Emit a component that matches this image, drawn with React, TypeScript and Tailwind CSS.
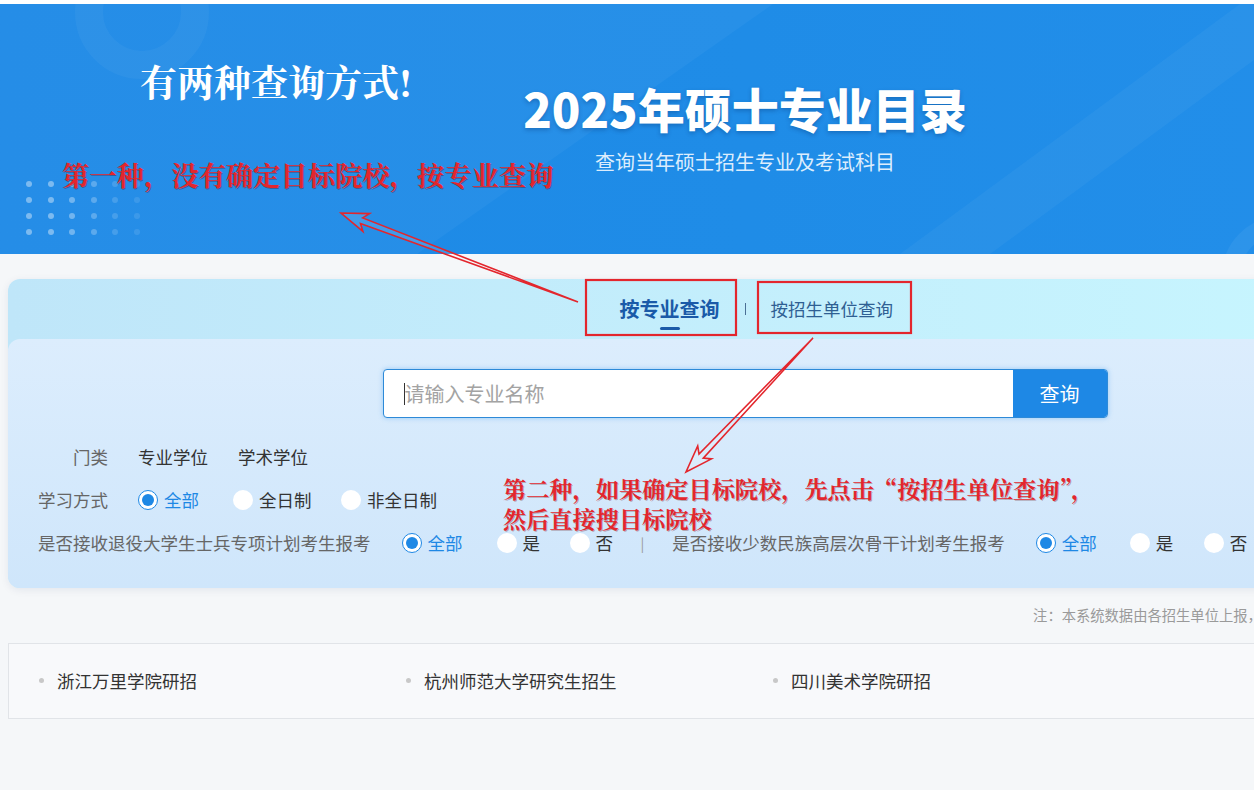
type Pt = [number, number];

// hollow annotation arrow, points computed along tail -> tip
function arrowPoints(tail: Pt, tip: Pt, head = 26, wing = 10, shaft = 3.5) {
  const dx = tip[0] - tail[0];
  const dy = tip[1] - tail[1];
  const len = Math.hypot(dx, dy);
  const ux = dx / len;
  const uy = dy / len;
  const nx = -uy;
  const ny = ux;
  const at = (a: number, b: number) =>
    `${(tail[0] + ux * a + nx * b).toFixed(1)},${(tail[1] + uy * a + ny * b).toFixed(1)}`;
  const base = len - head;
  return [at(0, 0), at(base + 3, shaft), at(base - 2, wing), at(len, 0), at(base - 2, -wing), at(base + 3, -shaft)].join(" ");
}

const dotCols = ["bg-white/40", "bg-white/40", "bg-white/35", "bg-white/25", "bg-white/15", "bg-white/10"];

function Banner() {
  return (
    <div className="relative h-[250px] overflow-hidden bg-gradient-to-r from-[#1d89e6] via-[#1f8ce7] to-[#238fea]">
      <div className="absolute inset-0 bg-white/[0.035] [clip-path:polygon(0_0,773px_0,417px_100%,0_100%)]" />
      <div className="absolute inset-0 bg-white/[0.04] [clip-path:polygon(900px_100%,990px_100%,1330px_0,1240px_0)]" />
      <div className="absolute left-[75px] top-[-59px] h-[134px] w-[134px] rounded-full border-[28px] border-white/[0.04]" />
      <div className="absolute left-[1222px] top-[212px] h-[120px] w-[120px] rounded-full border-[18px] border-white/[0.05]" />
      <div className="absolute left-[26px] top-[177px] grid grid-cols-6 gap-x-[15.5px] gap-y-[10px]">
        {Array.from({ length: 24 }).map((_, i) => (
          <span key={i} className={`h-[6px] w-[6px] rounded-full ${dotCols[i % 6]}`} />
        ))}
      </div>
      <div className="relative flex flex-col items-center pt-[80px]">
        <h1 className="text-[47px] font-black leading-[47px] text-white [text-shadow:0_2px_4px_rgba(0,40,100,0.3)]">
          2025年硕士专业目录
        </h1>
        <p className="mt-[21px] text-[20px] leading-[20px] text-[#dcedfd]">查询当年硕士招生专业及考试科目</p>
      </div>
    </div>
  );
}

function Radio({ checked }: { checked?: boolean }) {
  if (checked) {
    return (
      <span className="flex h-5 w-5 shrink-0 items-center justify-center rounded-full border-[1.5px] border-[#1e88e5] bg-white">
        <span className="h-[12px] w-[12px] rounded-full bg-[#1e88e5]" />
      </span>
    );
  }
  return <span className="h-5 w-5 shrink-0 rounded-full bg-white" />;
}

function Option({ label, checked, w }: { label: string; checked?: boolean; w: string }) {
  return (
    <span className={`flex items-center ${w}`}>
      <Radio checked={checked} />
      <span className={checked ? "ml-[6px] text-[#1e88e5]" : "ml-[6px] text-[#333]"}>{label}</span>
    </span>
  );
}

function Filters() {
  return (
    <div className="px-[30px] text-[17.5px] leading-none">
      <div className="mt-[17.5px] flex h-[43px] items-center">
        <span className="w-[70px] text-right text-[#666]">门类</span>
        <span className="ml-[30px] text-[#333]">专业学位</span>
        <span className="ml-[30px] text-[#333]">学术学位</span>
      </div>
      <div className="flex h-[43px] items-center">
        <span className="w-[70px] text-[#666]">学习方式</span>
        <span className="ml-[30px] flex items-center">
          <Option label="全部" checked w="w-[95px]" />
          <Option label="全日制" w="w-[108px]" />
          <Option label="非全日制" w="w-[110px]" />
        </span>
      </div>
      <div className="flex h-[43px] items-center">
        <span className="text-[#666]">是否接收退役大学生士兵专项计划考生报考</span>
        <span className="ml-[31px] flex items-center">
          <Option label="全部" checked w="w-[95px]" />
          <Option label="是" w="w-[73px]" />
          <Option label="否" w="w-[71px]" />
        </span>
        <span className="text-[14px] text-[#999]">|</span>
        <span className="ml-[28px] text-[#666]">是否接收少数民族高层次骨干计划考生报考</span>
        <span className="ml-[31px] flex items-center">
          <Option label="全部" checked w="w-[94px]" />
          <Option label="是" w="w-[74px]" />
          <Option label="否" w="w-[74px]" />
        </span>
      </div>
    </div>
  );
}

function Annotations() {
  const red = "#e3262d";
  return (
    <div className="pointer-events-none absolute inset-0 z-10 font-['Noto_Serif_CJK_SC','Noto_Sans_CJK_SC',serif]">
      <div className="absolute left-[140px] top-[60px] text-[37px] font-bold leading-[42px] text-white">有两种查询方式!</div>
      <div className="absolute left-[62px] top-[160px] text-[27.3px] font-bold leading-[30px] text-[#e3262d] [text-shadow:1px_1px_0_rgba(90,0,0,0.35)]">
        第一种，没有确定目标院校，按专业查询
      </div>
      <div className="absolute left-[503px] top-[473px] text-[23.2px] font-bold leading-[30px] text-[#e3262d] [text-shadow:1px_1px_0_rgba(90,0,0,0.3)]">
        <div>第二种，如果确定目标院校，先点击“按招生单位查询”，</div>
        <div>然后直接搜目标院校</div>
      </div>
      <svg className="absolute left-0 top-0" width="1490" height="790" viewBox="0 0 1490 790">
        <rect x="586" y="280" width="150" height="55" fill="none" stroke={red} strokeWidth="2.2" />
        <rect x="758" y="282" width="153" height="51" fill="none" stroke={red} strokeWidth="2.2" />
        <polygon points={arrowPoints([578, 302], [341, 213], 25, 9.5, 3)} fill="rgba(255,255,255,0.12)" stroke={red} strokeWidth="1.6" strokeLinejoin="miter" />
        <polygon points={arrowPoints([813, 338], [686, 472], 25, 9.5, 3)} fill="rgba(255,255,255,0.12)" stroke={red} strokeWidth="1.6" strokeLinejoin="miter" />
      </svg>
    </div>
  );
}

export default function App() {
  const links = ["浙江万里学院研招", "杭州师范大学研究生招生", "四川美术学院研招"];
  return (
    <div className="relative h-[790px] w-[1254px] overflow-hidden bg-[#f5f7f9] font-['Noto_Sans_CJK_SC','Noto_Sans',sans-serif]">
      <div className="relative w-[1490px]">
        <div className="h-[4px] bg-white" />
        <Banner />
        <main className="px-2">
          <section className="mt-[25px] overflow-hidden rounded-xl bg-gradient-to-r from-[#bfe6f9] to-[#c8f7ff] shadow-[0_2px_8px_rgba(0,40,90,0.08)]">
            <div className="flex h-[60px] items-center justify-center">
              <div className="flex w-[300px] justify-end">
                <span className="relative text-[20px] font-bold leading-none text-[#1a5aa8]">
                  按专业查询
                  <span className="absolute left-1/2 top-[28px] h-[3px] w-5 -translate-x-1/2 rounded-full bg-[#1a5aa8]" />
                </span>
              </div>
              <span className="mx-[25px] h-[12px] w-px bg-[#4a6f95]" />
              <div className="w-[300px]">
                <span className="text-[17.5px] leading-none text-[#2f5f93]">按招生单位查询</span>
              </div>
            </div>
            <div className="rounded-t-xl bg-gradient-to-b from-[#dcedfd] to-[#cfe6fb] pb-[23px] pt-[30px]">
              <div className="mx-auto flex h-[49px] w-[725px] overflow-hidden rounded border border-[#2d8ad8] bg-white shadow-[0_0_5px_rgba(30,136,229,0.35)]">
                <div className="flex flex-1 items-center pl-[20px]">
                  <span className="h-[22px] w-px bg-[#333]" />
                  <span className="text-[20px] leading-none text-[#a3a3a3]">请输入专业名称</span>
                </div>
                <button className="w-[94px] bg-[#1e88e5] text-[20px] text-white">查询</button>
              </div>
              <Filters />
            </div>
          </section>
          <div className="flex h-[55px] items-center justify-end pr-[20px] text-[14.3px] text-[#9a9a9a]">
            注：本系统数据由各招生单位上报，如有疑问请咨询相关招生单位。
          </div>
          <div className="flex h-[76px] items-center border border-[#e1e4e8] bg-[#f8f9fb] pl-[30px]">
            {links.map((l) => (
              <div key={l} className="flex w-[367px] items-center">
                <span className="h-[5px] w-[5px] rounded-full bg-[#c8c8c8]" />
                <span className="ml-[13px] text-[17.5px] leading-none text-[#333]">{l}</span>
              </div>
            ))}
          </div>
        </main>
        <Annotations />
      </div>
    </div>
  );
}
